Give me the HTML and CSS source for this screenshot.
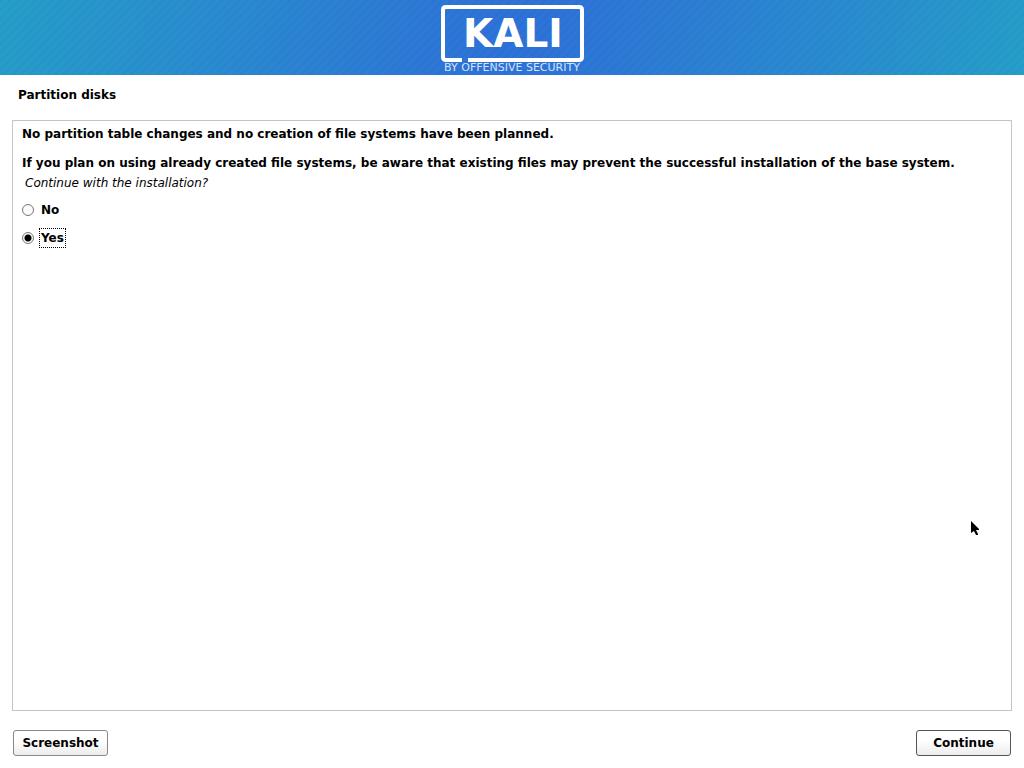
FILE: index.html
```html
<!DOCTYPE html>
<html lang="en">
<head>
<meta charset="utf-8">
<meta name="viewport" content="width=device-width, initial-scale=1">
<title>Partition disks</title>
<link rel="stylesheet" href="styles.css">
</head>
<body>
<header class="banner">
  <svg class="logo" viewBox="0 0 146 75" role="img" aria-label="Kali by Offensive Security">
    <path class="logo-frame" d="M23 60H7Q4 60 4 57V10Q4 7 7 7H140Q143 7 143 10V57Q143 60 140 60H29"/>
    <text class="logo-name" x="74" y="47">KALI</text>
    <text class="logo-tagline" x="73" y="71">BY OFFENSIVE SECURITY</text>
  </svg>
</header>
<form class="installer">
  <h1 class="title">Partition disks</h1>
  <main class="panel">
    <p class="message">No partition table changes and no creation of file systems have been planned.</p>
    <p class="message">If you plan on using already created file systems, be aware that existing files may prevent the successful installation of the base system.</p>
    <fieldset class="choices">
      <legend class="question">Continue with the installation?</legend>
      <div class="choice">
        <input class="radio" type="radio" name="continue" id="no" value="no">
        <label class="choice-label" for="no">No</label>
      </div>
      <div class="choice">
        <input class="radio" type="radio" name="continue" id="yes" value="yes" checked>
        <label class="choice-label choice-focused" for="yes">Yes</label>
      </div>
    </fieldset>
  </main>
  <footer class="actions">
    <button class="button" type="button">Screenshot</button>
    <button class="button button-default" type="button">Continue</button>
  </footer>
</form>
<svg class="pointer" viewBox="0 0 9 15" aria-hidden="true"><path d="M0 0L8 8V9H5L7 13V14H5L3 10L0 12Z"/></svg>
</body>
</html>
```

FILE: styles.css
```css
* {
  box-sizing: border-box;
}

body {
  position: relative;
  display: flex;
  flex-direction: column;
  min-height: 100vh;
  margin: 0;
  background: #fff;
  color: #000;
  font: bold 12px/16px "DejaVu Sans", sans-serif;
}

.banner {
  display: flex;
  justify-content: center;
  height: 75px;
  background:
    repeating-linear-gradient(135deg, rgba(0, 20, 80, 0.03) 0 3px, transparent 3px 6px),
    linear-gradient(105deg, #269fc9 0%, #2a8bd0 22%, #2e73d8 48%, #2e73d8 53%, #2a8bd0 80%, #269fc9 100%);
}

.logo {
  width: 146px;
  height: 75px;
}

.logo-frame {
  fill: none;
  stroke: #fff;
  stroke-width: 4;
}

.logo-name {
  fill: #fff;
  font: bold 39px "DejaVu Sans", sans-serif;
  text-anchor: middle;
}

.logo-tagline {
  fill: #d5e3f7;
  font: 11px "DejaVu Sans", sans-serif;
  text-anchor: middle;
}

.installer {
  display: flex;
  flex: 1;
  flex-direction: column;
  padding: 12px 12px;
}

.title {
  margin: 0 6px 17px;
  font-size: 12px;
  line-height: 16px;
}

.panel {
  flex: 1;
  padding: 5px 9px;
  border: 1px solid #c4c4c4;
}

.message {
  margin: 0 0 13px;
}

.choices {
  margin: -9px 0 0;
  padding: 0;
  border: 0;
}

.question {
  margin-bottom: 5px;
  padding: 0 3px;
  font-style: italic;
  font-weight: normal;
}

.choice {
  display: flex;
  align-items: center;
  gap: 5px;
  height: 28px;
}

.radio {
  width: 12px;
  height: 12px;
  margin: 0;
  border: 1px solid #777;
  border-radius: 50%;
  appearance: none;
  background: #fafafa;
}

.radio:checked {
  background: radial-gradient(circle, #000 0 3px, #fafafa 4px);
}

.choice-label {
  padding: 1px;
  border: 1px dotted transparent;
}

.choice-focused {
  border-color: #000;
}

.actions {
  display: flex;
  justify-content: space-between;
  padding: 19px 1px 0;
}

.button {
  width: 95px;
  height: 26px;
  padding: 0;
  border: 1px solid #888;
  border-radius: 3px;
  background: linear-gradient(#fff 40%, #ececec);
  color: #000;
  font: inherit;
}

.button-default {
  border-color: #555;
}

.pointer {
  position: absolute;
  top: 521px;
  left: 971px;
  width: 9px;
  height: 15px;
}
```
